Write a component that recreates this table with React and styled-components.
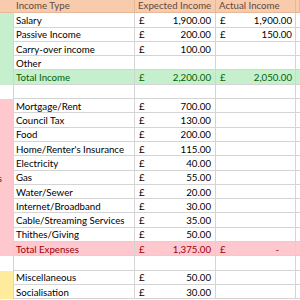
import React from 'react'
import styled, { createGlobalStyle } from 'styled-components'

const GlobalStyle = createGlobalStyle`
  html, body {
    margin: 0;
    padding: 0;
    background: #ffffff;
  }
  body {
    font-family: Lato, "Liberation Sans", sans-serif;
    font-size: 9.7px;
    overflow: hidden;
  }
`

const sectionColors = {
  head: '#f8cbad',
  income: '#c6efce',
  fixed: '#ffc7ce',
  other: '#ffeb9c',
  none: '#ffffff',
}

const totalStyles = {
  income: { bg: '#c6efce', fg: '#006100' },
  fixed: { bg: '#ffc7ce', fg: '#9c0006' },
}

const rows = [
  { section: 'income', label: 'Salary', expected: '1,900.00', actual: '1,900.00' },
  { section: 'income', label: 'Passive Income', expected: '200.00', actual: '150.00' },
  { section: 'income', label: 'Carry-over income', expected: '100.00' },
  { section: 'income', label: 'Other' },
  { section: 'income', label: 'Total Income', expected: '2,200.00', actual: '2,050.00', total: true },
  { section: 'none', label: '' },
  { section: 'fixed', label: 'Mortgage/Rent', expected: '700.00' },
  { section: 'fixed', label: 'Council Tax', expected: '130.00' },
  { section: 'fixed', label: 'Food', expected: '200.00' },
  { section: 'fixed', label: "Home/Renter's Insurance", expected: '115.00' },
  { section: 'fixed', label: 'Electricity', expected: '40.00' },
  { section: 'fixed', label: 'Gas', expected: '55.00', stripText: 'Fixed Expenses' },
  { section: 'fixed', label: 'Water/Sewer', expected: '20.00' },
  { section: 'fixed', label: 'Internet/Broadband', expected: '30.00' },
  { section: 'fixed', label: 'Cable/Streaming Services', expected: '35.00' },
  { section: 'fixed', label: 'Thithes/Giving', expected: '50.00' },
  { section: 'fixed', label: 'Total Expenses', expected: '1,375.00', actual: '-', total: true },
  { section: 'none', label: '' },
  { section: 'other', label: 'Miscellaneous', expected: '50.00' },
  { section: 'other', label: 'Socialisation', expected: '30.00' },
]

function Money({ value, fg, actual }) {
  if (!value) return <Cell $fg={fg} $actual={actual} />
  return (
    <Cell $fg={fg} $actual={actual}>
      <Pound>£</Pound>
      <Amount $dash={value === '-'}>{value}</Amount>
    </Cell>
  )
}

export default function App() {
  return (
    <>
      <GlobalStyle />
      <Sheet>
        <Row $bg={sectionColors.head}>
          <Strip $bg={sectionColors.head} $head />
          <Head $first>Income Type</Head>
          <Head>Expected Income</Head>
          <Head>Actual Income</Head>
          <Head />
        </Row>
        {rows.map((r, i) => {
          const t = r.total ? totalStyles[r.section] : null
          return (
            <Row key={i} $bg={t ? t.bg : '#ffffff'}>
              <Strip $bg={sectionColors[r.section]}>
                {r.stripText && <StripText>{r.stripText}</StripText>}
              </Strip>
              <Label $fg={t && t.fg}>{r.label}</Label>
              <Money value={r.expected} fg={t && t.fg} />
              <Money value={r.actual} fg={t && t.fg} actual />
              <Cell />
            </Row>
          )
        })}
      </Sheet>
    </>
  )
}

const Sheet = styled.div`
  margin-top: -1px;
  width: 300px;
`

const Row = styled.div`
  display: grid;
  grid-template-columns: 14px 121px 81px 80px 1fr;
  height: 14.3px;
  background: ${(p) => p.$bg};
`

const Strip = styled.div`
  background: ${(p) => p.$bg};
  border-right: 1px solid #d4d4d4;
  border-bottom: ${(p) => (p.$head ? '1px solid #e6b89a' : 'none')};
  box-sizing: border-box;
  overflow: hidden;
  position: relative;
`

const StripText = styled.span`
  position: absolute;
  right: 11px;
  top: 0;
  line-height: 14px;
  white-space: nowrap;
  color: #3a2a2a;
`

const Head = styled.div`
  box-sizing: border-box;
  border-right: 1px solid #e6b89a;
  border-bottom: 1px solid #e6b89a;
  color: #5e4a3c;
  padding-left: ${(p) => (p.$first ? '2px' : '3px')};
  line-height: 13.3px;
  white-space: nowrap;
  overflow: hidden;
`

const Cell = styled.div`
  box-sizing: border-box;
  border-right: 1px solid #d4d4d4;
  border-bottom: 1px solid #d4d4d4;
  display: flex;
  justify-content: space-between;
  align-items: center;
  padding: 0 ${(p) => (p.$actual ? '3px' : '4px')} 0 4px;
  color: ${(p) => p.$fg || '#000000'};
  white-space: nowrap;
  overflow: hidden;
`

const Label = styled(Cell)`
  padding-left: 2px;
  justify-content: flex-start;
`

const Pound = styled.span``

const Amount = styled.span`
  margin-right: ${(p) => (p.$dash ? '13px' : '0')};
`
